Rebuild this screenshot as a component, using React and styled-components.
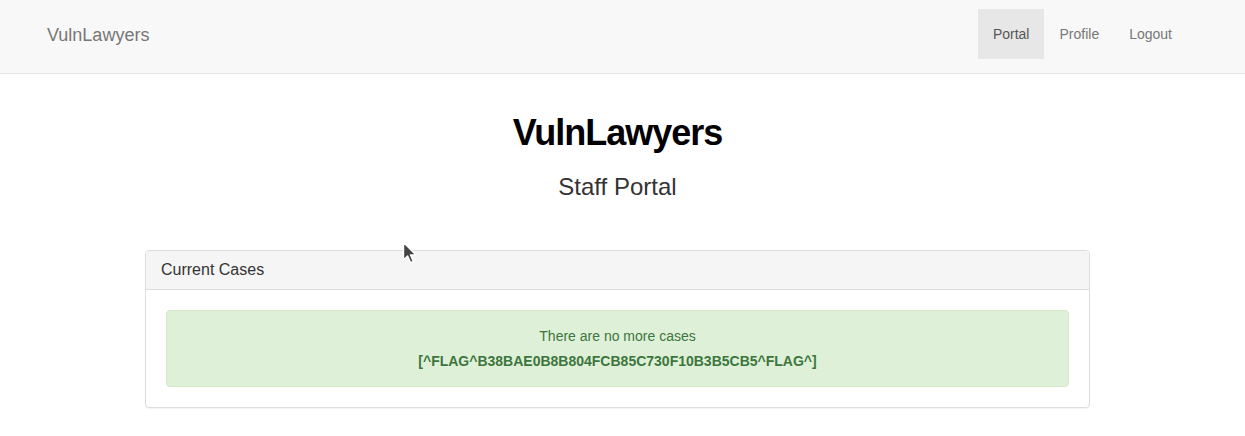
import React from 'react';
import styled, { createGlobalStyle } from 'styled-components';

const GlobalStyle = createGlobalStyle`
    html, body {
        margin: 0;
        padding: 0;
        background: #fff;
    }
    body {
        font-family: "Liberation Sans", Arial, Helvetica, sans-serif;
        font-size: 14px;
        line-height: 20px;
        color: #333;
    }
    * {
        box-sizing: border-box;
    }
`;

const navItems = [
    { label: 'Portal', active: true },
    { label: 'Profile' },
    { label: 'Logout' },
];

const App = function () {
    return (
        <Page>
            <GlobalStyle/>
            <Navbar>
                <Brand href="#">VulnLawyers</Brand>
                <NavList>
                    {navItems.map(item => (
                        <NavItem key={item.label}>
                            <NavLink href="#" $active={item.active}>{item.label}</NavLink>
                        </NavItem>
                    ))}
                </NavList>
            </Navbar>

            <Main>
                <Title>VulnLawyers</Title>
                <Subtitle>Staff Portal</Subtitle>

                <Panel>
                    <PanelHeading>
                        <PanelTitle>Current Cases</PanelTitle>
                    </PanelHeading>
                    <PanelBody>
                        <Alert>
                            <AlertText>There are no more cases</AlertText>
                            <AlertText $strong>[^FLAG^B38BAE0B8B804FCB85C730F10B3B5CB5^FLAG^]</AlertText>
                        </Alert>
                    </PanelBody>
                </Panel>
            </Main>

            {/* mouse pointer caught in the screenshot */}
            <Cursor width="16" height="24" viewBox="0 0 16 24">
                <path d="M1.5 1.5 L1.5 19 L5.6 15 L8.6 21.6 L11.4 20.4 L8.5 14 L14 14 Z"
                      fill="#444" stroke="#fff" strokeWidth="1.4" strokeLinejoin="round"/>
            </Cursor>
        </Page>
    )
};

export default App;

const Page = styled.div`
    position: relative;
    min-height: 436px;
`;

const Navbar = styled.nav`
    display: flex;
    justify-content: space-between;
    align-items: flex-start;
    height: 74px;
    padding: 9px 58px 0 32px;
    background: #f8f8f8;
    border-bottom: 1px solid #e7e7e7;
`;

const Brand = styled.a`
    display: block;
    padding: 16px 15px 14px;
    font-size: 18px;
    line-height: 20px;
    color: #777;
    text-decoration: none;
`;

const NavList = styled.ul`
    display: flex;
    margin: 0;
    padding: 0;
    list-style: none;
`;

const NavItem = styled.li`
    display: block;
`;

const NavLink = styled.a`
    display: block;
    padding: 15px 15px;
    line-height: 20px;
    color: ${props => props.$active ? '#555' : '#777'};
    background: ${props => props.$active ? '#e7e7e7' : 'transparent'};
    text-decoration: none;
`;

const Main = styled.main`
    display: flex;
    flex-direction: column;
    align-items: center;
    padding: 39px 10px 0 0;
`;

const Title = styled.h1`
    margin: 0;
    font-size: 36px;
    line-height: 1.1;
    font-weight: 700;
    letter-spacing: -1px;
    color: #000;
`;

const Subtitle = styled.h3`
    margin: 21px 0 0;
    font-size: 24px;
    line-height: 1.1;
    font-weight: 400;
    color: #333;
`;

const Panel = styled.section`
    width: 945px;
    margin-top: 50px;
    background: #fff;
    border: 1px solid #ddd;
    border-radius: 4px;
    box-shadow: 0 1px 1px rgba(0, 0, 0, .05);
`;

const PanelHeading = styled.div`
    padding: 10px 15px;
    height: 39px;
    background: #f5f5f5;
    border-bottom: 1px solid #ddd;
    border-radius: 3px 3px 0 0;
`;

const PanelTitle = styled.h3`
    margin: 0;
    font-size: 16px;
    line-height: 17.6px;
    font-weight: 400;
    color: #333;
`;

const PanelBody = styled.div`
    padding: 20px;
`;

const Alert = styled.div`
    padding: 15px;
    background: #dff0d8;
    border: 1px solid #d6e9c6;
    border-radius: 4px;
    color: #3c763d;
    text-align: center;
`;

const AlertText = styled.p`
    margin: 0;
    font-weight: ${props => props.$strong ? 700 : 400};

    & + & {
        margin-top: 5px;
    }
`;

const Cursor = styled.svg`
    position: absolute;
    left: 402px;
    top: 241px;
`;
